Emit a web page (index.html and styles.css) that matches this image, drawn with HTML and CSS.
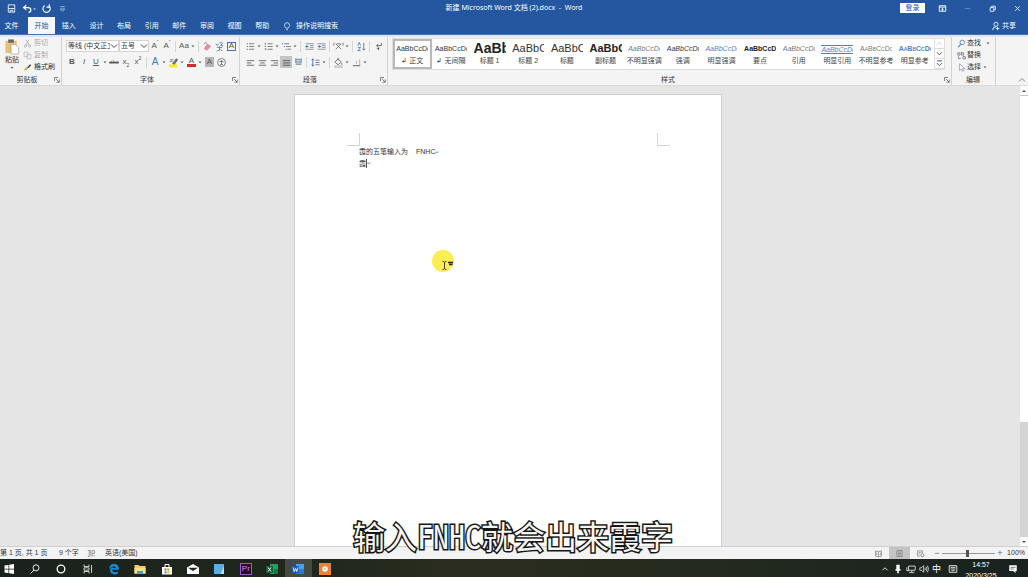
FILE: index.html
```html
<!DOCTYPE html>
<html lang="zh-CN">
<head>
<meta charset="utf-8">
<title>新建 Microsoft Word 文档 (2).docx - Word</title>
<link rel="stylesheet" href="styles.css">
</head>
<body>
<svg class="defs" aria-hidden="true">
  <symbol id="caret" viewBox="0 0 6 12"><path d="M1.5 5.5h3L3 7.2z" fill="#555"/></symbol>
  <symbol id="chev" viewBox="0 0 8 8"><path d="M1 2.5l3 3 3-3" fill="none" stroke="#444"/></symbol>
  <symbol id="launch" viewBox="0 0 6 6"><path d="M.5 4V.5H4M2 2l3 3M5.300 2.500v2.800H2.500" fill="none" stroke="#666" stroke-width=".8"/></symbol>
</svg>

<header class="titlebar">
  <div class="quick">
    <button aria-label="保存"><svg viewBox="0 0 12 12"><path d="M2.500 2h7v8h-7zM2.500 6h7M4.500 10V8h3v2" fill="none" stroke="#fff" stroke-width=".9"/></svg></button>
    <button class="wide" aria-label="撤消"><svg viewBox="0 0 18 12"><path d="M6 2.500L3 5l3 2.500M3.500 5H8q3 0 3 2.500T8.500 10" fill="none" stroke="#fff" stroke-width="1.300"/><path d="M13.500 6h3L15 7.500z" fill="#dce6f5"/></svg></button>
    <button aria-label="恢复"><svg viewBox="0 0 12 12"><path d="M4 2.800A4 4 0 1 0 8.500 3M6 4.500h3V1.300" fill="none" stroke="#fff" stroke-width="1.200"/></svg></button>
    <button class="more" aria-label="自定义"><svg viewBox="0 0 12 12"><path d="M3.500 4h5M3.500 6.500h5L6 9z" fill="none" stroke="#dce6f5" stroke-width=".7"/></svg></button>
  </div>
  <h1>新建 Microsoft Word 文档 (2).docx &nbsp;-&nbsp; Word</h1>
  <div class="window">
    <button class="login">登录</button>
    <button aria-label="功能区显示选项"><svg viewBox="0 0 12 12"><path d="M2.500 3h7v6h-7zM2.500 4.500h7M6 9V6M4.800 7L6 6l1.200 1" fill="none" stroke="#fff"/></svg></button>
    <button aria-label="最小化"><svg viewBox="0 0 12 12"><path d="M3 6h6" stroke="#7f9fd0" stroke-width=".7"/></svg></button>
    <button aria-label="还原"><svg viewBox="0 0 12 12"><path d="M3.500 5h4v4h-4zM5 5V3.500h4v4H7.500" fill="none" stroke="#fff" stroke-width=".9"/></svg></button>
    <button aria-label="关闭"><svg viewBox="0 0 12 12"><path d="M3.500 3.500l5 5M8.500 3.500l-5 5" stroke="#fff" stroke-width=".9"/></svg></button>
  </div>
</header>

<nav class="tabs">
  <button class="file">文件</button>
  <button class="active">开始</button>
  <div class="tablist">
    <button>插入</button><button>设计</button><button>布局</button><button>引用</button><button>邮件</button><button>审阅</button><button>视图</button><button>帮助</button>
  </div>
  <button class="tell"><svg viewBox="0 0 12 12"><path d="M4.500 8.500Q3 6.500 3 5a3 3 0 0 1 6 0q0 1.500-1.500 3.500zM4.800 10.500h2.400" fill="none" stroke="#fff" stroke-width=".8"/></svg>操作说明搜索</button>
  <button class="share"><svg viewBox="0 0 12 12"><circle cx="6" cy="4" r="2.500" fill="none" stroke="#fff"/><path d="M2 11q0-4 4-4M8 7v4M6 9h4" fill="none" stroke="#fff"/></svg>共享</button>
</nav>

<section class="ribbon">
  <div class="group clipboard">
    <div class="body">
      <button class="paste"><svg viewBox="0 0 16 18"><path d="M1 3h12v13H1z" fill="#e9c173"/><path d="M4 1.500h6V5H4z" fill="#666"/><path d="M7 7h5l3 3v7H7z" fill="#fff" stroke="#999" stroke-width=".7"/></svg><span>粘贴</span><svg class="down" viewBox="0 0 6 4"><path d="M1.500 1h3L3 2.700z" fill="#555"/></svg></button>
      <div class="stack">
        <button class="off"><svg viewBox="0 0 12 12"><path d="M4 1l4 7M8 1L4 8" stroke="#aaa"/><circle cx="3.300" cy="9.300" r="1.500" fill="none" stroke="#aaa"/><circle cx="8.700" cy="9.300" r="1.500" fill="none" stroke="#aaa"/></svg>剪切</button>
        <button class="off"><svg viewBox="0 0 12 12"><path d="M1.500 1.500h5v6h-5zM5.500 4.500h5v6h-5z" fill="#f6f6f6" stroke="#b5b5b5"/></svg>复制</button>
        <button><svg viewBox="0 0 12 12"><path d="M1 10q1-4 4-5l2 2q-1 3-6 3z" fill="#e2b35b"/><path d="M5.500 5.500l4-4 1.500 1.500-4 4z" fill="#444"/></svg>格式刷</button>
      </div>
    </div>
    <div class="caption"><span>剪贴板</span><svg><use href="#launch"/></svg></div>
  </div>

  <div class="group font">
    <div class="body">
      <div class="row">
        <span class="pick face"><select aria-label="字体"><option>等线 (中文正文)</option></select><svg><use href="#chev"/></svg></span>
        <span class="pick size"><select aria-label="字号"><option>五号</option></select><svg><use href="#chev"/></svg></span>
        <button class="t">A<sup>ˆ</sup></button><button class="t">A<sup>ˇ</sup></button>
        <hr>
        <button class="t">Aa</button><svg class="c"><use href="#caret"/></svg>
        <hr>
        <button aria-label="清除格式"><svg viewBox="0 0 12 12"><path d="M2 8l4-5 4 2.500-4 4.500H3.500z" fill="#e58aa0"/><path d="M2 4l2-3 2 3" fill="none" stroke="#888" stroke-width=".8"/></svg></button>
        <button aria-label="拼音指南"><svg viewBox="0 0 12 12"><path d="M2 3l1.500 2L5 3M6 2h3v1L7 5h3M3 7h6M6 6v4l-3 1M6 8l3 3" fill="none" stroke="#55779f" stroke-width=".9"/></svg></button>
        <button class="t boxed">A</button>
      </div>
      <div class="row">
        <button class="t"><b>B</b></button><button class="t"><em>I</em></button><button class="t"><u>U</u></button><svg class="c"><use href="#caret"/></svg>
        <button class="t small"><s>abc</s></button><button class="t">x<sub>2</sub></button><button class="t">x<sup>2</sup></button>
        <hr>
        <button class="t glow">A</button><svg class="c"><use href="#caret"/></svg>
        <button aria-label="突出显示"><svg viewBox="0 0 12 12"><path d="M1 8h9v3.500H1z" fill="#f7ea27"/><path d="M2 3h4M2 5h3M5 7l4-5 1.500 1-3.500 5z" fill="#777" stroke="#555" stroke-width=".8"/></svg></button><svg class="c"><use href="#caret"/></svg>
        <button class="t red">A</button><svg class="c"><use href="#caret"/></svg>
        <button class="t shade">A</button>
        <button aria-label="带圈字符"><svg viewBox="0 0 12 12"><circle cx="6" cy="6" r="4.300" fill="none" stroke="#555" stroke-width=".8"/><path d="M3.700 5h4.600M6 3.500V8M4.500 8.300h3" stroke="#555" stroke-width=".8"/></svg></button>
      </div>
    </div>
    <div class="caption"><span>字体</span><svg><use href="#launch"/></svg></div>
  </div>

  <div class="group para">
    <div class="body">
      <div class="row">
        <button aria-label="项目符号"><svg viewBox="0 0 12 12"><path d="M4.500 3H10M4.500 6H10M4.500 9H10" stroke="#777"/><path d="M2 3h1.300M2 6h1.300M2 9h1.300" stroke="#4472b0" stroke-width="1.200"/></svg></button><svg class="c"><use href="#caret"/></svg>
        <button aria-label="编号"><svg viewBox="0 0 12 12"><path d="M5 3h5.500M5 6h5.500M5 9h5.500" stroke="#777"/><path d="M2.500 2v2.500M1.800 6h1.500M1.800 8.500h1.500v1.500" fill="none" stroke="#4472b0" stroke-width=".9"/></svg></button><svg class="c"><use href="#caret"/></svg>
        <button aria-label="多级列表"><svg viewBox="0 0 12 12"><path d="M3.500 3H9M5.500 6H11M7 9h4" stroke="#777"/><path d="M1 3h1.200M3 6h1.200M5 9h1" stroke="#4472b0" stroke-width="1.200"/></svg></button><svg class="c"><use href="#caret"/></svg>
        <hr>
        <button aria-label="减少缩进"><svg viewBox="0 0 12 12"><path d="M1.500 3h9M6.500 5h4M6.500 7h4M1.500 9h9" stroke="#777" stroke-width=".8"/><path d="M5 6H2M3.300 4.700L2 6l1.300 1.300" fill="none" stroke="#2f66b5"/></svg></button>
        <button aria-label="增加缩进"><svg viewBox="0 0 12 12"><path d="M1.500 3h9M6.500 5h4M6.500 7h4M1.500 9h9" stroke="#777" stroke-width=".8"/><path d="M2 6h3M3.700 4.700L5 6 3.700 7.300" fill="none" stroke="#2f66b5"/></svg></button>
        <hr>
        <button aria-label="中文版式"><svg viewBox="0 0 12 12"><path d="M3 3l6 6M9 3L3 9M1 2v3M11 2v3M4 3h4" stroke="#666" stroke-width=".9"/></svg></button><svg class="c"><use href="#caret"/></svg>
        <hr>
        <button aria-label="排序"><svg viewBox="0 0 12 12"><path d="M2 5l1.500-3.500L5 5M2 7h3l-3 3.500h3" fill="none" stroke="#4472b0" stroke-width=".9"/><path d="M8.500 2v8M7 8.500L8.500 10 10 8.500" fill="none" stroke="#666" stroke-width=".9"/></svg></button>
        <hr>
        <button aria-label="显示编辑标记"><svg viewBox="0 0 12 12"><path d="M9 2v3H4M5.500 3.500L4 5l1.500 1.500M4 8h3M6 7v3" fill="none" stroke="#555" stroke-width=".9"/></svg></button>
      </div>
      <div class="row">
        <button aria-label="左对齐"><svg viewBox="0 0 12 12"><path d="M2 4h8M2 6.500h5M2 9h8" stroke="#666"/></svg></button>
        <button aria-label="居中"><svg viewBox="0 0 12 12"><path d="M2 4h8M3.500 6.500h5M2 9h8" stroke="#666"/></svg></button>
        <button aria-label="右对齐"><svg viewBox="0 0 12 12"><path d="M2 4h8M5 6.500h5M2 9h8" stroke="#666"/></svg></button>
        <button class="on" aria-label="两端对齐"><svg viewBox="0 0 12 12"><path d="M2 4h8M2 6.500h8M2 9h8" stroke="#555"/></svg></button>
        <button aria-label="分散对齐"><svg viewBox="0 0 12 12"><path d="M3 1.500v5M9 1.500v5M3 2.500h6M3 4.500h6M3 6.500h6M3 8h6" stroke="#5678a8" stroke-width=".9"/></svg></button>
        <hr>
        <button aria-label="行距"><svg viewBox="0 0 12 12"><path d="M3 2v8M1.800 3.500L3 2l1.200 1.500M1.800 8.500L3 10l1.200-1.500" fill="none" stroke="#2f66b5" stroke-width=".9"/><path d="M6 3.500h4.500M6 6h4.500M6 8.500h4.500" stroke="#777"/></svg></button><svg class="c"><use href="#caret"/></svg>
        <hr>
        <button aria-label="底纹"><svg viewBox="0 0 12 12"><path d="M5.500 2L2 5.500 5.500 8.500 9 5.500zM5.500 4V1M9.500 6.500v2" fill="none" stroke="#666" stroke-width=".9"/><path d="M2 9.800h8v1.400H2z" fill="#fff" stroke="#888" stroke-width=".6"/></svg></button><svg class="c"><use href="#caret"/></svg>
        <button aria-label="边框"><svg viewBox="0 0 12 12"><path d="M2 9.500h8" stroke="#555"/><path d="M9.500 2.500v7M6 4.500v3" stroke="#999" stroke-width=".8"/></svg></button><svg class="c"><use href="#caret"/></svg>
      </div>
    </div>
    <div class="caption"><span>段落</span><svg><use href="#launch"/></svg></div>
  </div>

  <div class="group styles">
    <div class="gallery">
      <div class="items">
        <button class="sel"><span>AaBbCcDc</span>↲ 正文</button>
        <button><span>AaBbCcDc</span>↲ 无间隔</button>
        <button><span class="h1">AaBb</span>标题 1</button>
        <button><span class="h2">AaBbC</span>标题 2</button>
        <button><span class="h2">AaBbC</span>标题</button>
        <button><span class="h2 bold">AaBbC</span>副标题</button>
        <button><span class="it soft">AaBbCcDc</span>不明显强调</button>
        <button><span class="it">AaBbCcDc</span>强调</button>
        <button><span class="it blue">AaBbCcDc</span>明显强调</button>
        <button><span class="bold">AaBbCcD</span>要点</button>
        <button><span class="it soft">AaBbCcDc</span>引用</button>
        <button><span class="it blue lined">AaBbCcDc</span>明显引用</button>
        <button><span class="soft caps">AaBbCcDc</span>不明显参考</button>
        <button><span class="blue caps bold">AaBbCcDc</span>明显参考</button>
      </div>
      <div class="spin">
        <button aria-label="上一行"><svg viewBox="0 0 8 8"><path d="M1 5.500l3-3 3 3" fill="none" stroke="#ccc"/></svg></button>
        <button aria-label="下一行"><svg><use href="#chev"/></svg></button>
        <button aria-label="其他"><svg viewBox="0 0 8 8"><path d="M1 1h6M1 3.500l3 3 3-3" fill="none" stroke="#444"/></svg></button>
      </div>
    </div>
    <div class="caption"><span>样式</span><svg><use href="#launch"/></svg></div>
  </div>

  <div class="group edit">
    <div class="stack">
      <button><svg viewBox="0 0 12 12"><circle cx="7" cy="4.500" r="3" fill="none" stroke="#4472b0"/><path d="M5 7l-3.500 4" stroke="#4472b0" stroke-width="1.500"/></svg>查找<svg class="c last"><use href="#caret"/></svg></button>
      <button><svg viewBox="0 0 12 12"><path d="M1 2.500h3v3H1zM6 1v4.500h3v-3H6M2 7v3h3M8 7.500h3v3H8z" fill="none" stroke="#5b6f8d"/></svg>替换</button>
      <button><svg viewBox="0 0 12 12"><path d="M3.500 1v9L6 8l1.500 3L9 10.300 7.500 7.500h3z" fill="#fff" stroke="#777" stroke-width=".8"/></svg>选择<svg class="c"><use href="#caret"/></svg></button>
    </div>
    <div class="caption"><span>编辑</span></div>
  </div>
  <button class="collapse" aria-label="折叠功能区"><svg viewBox="0 0 8 8"><path d="M1 5.500l3-3 3 3" fill="none" stroke="#888"/></svg></button>
</section>

<main class="workspace">
  <article class="page">
    <div class="marks"><i></i><i></i></div>
    <div class="text">
      <p><span>霞的五笔输入为</span><span>FNHC<small>↵</small></span></p>
      <p class="typing"><span>霞</span><i></i><small>↵</small></p>
    </div>
    <svg class="pointer" viewBox="0 0 24 24"><circle cx="11" cy="11" r="11" fill="#fbee50"/><path d="M10.500 11.500q2 0 2 1v6q0 1-2 1M14.500 11.500q-2 0-2 1v6q0 1 2 1" fill="none" stroke="#443f20"/><path d="M16 12.500h5M17 14.500h3.500" stroke="#222" stroke-width="1.700"/></svg>
  </article>
  <div class="scroll">
    <button aria-label="向上"><svg viewBox="0 0 8 8"><path d="M2 5h4L4 3z" fill="#555"/></svg></button>
    <div class="track"><div class="thumb"></div></div>
    <button aria-label="向下"><svg viewBox="0 0 8 8"><path d="M2 3h4L4 5z" fill="#555"/></svg></button>
  </div>
</main>

<footer class="status">
  <span class="pages">第 1 页, 共 1 页</span>
  <span class="words">9 个字</span>
  <svg class="proof" viewBox="0 0 12 12"><path d="M1 2h4v8M3 2v8H1M7 10V2h3v4H7M9 8l1 2" fill="none" stroke="#777" stroke-width=".9"/></svg>
  <span>英语(美国)</span>
  <div class="views">
    <button aria-label="阅读视图"><svg viewBox="0 0 12 12"><path d="M2 2.500l4 1 4-1v7l-4 1-4-1zM6 3.500v7M3.500 5v3M8.500 5v3" fill="none" stroke="#777" stroke-width=".9"/></svg></button>
    <button class="on" aria-label="页面视图"><svg viewBox="0 0 12 12"><path d="M2.500 2h7v8h-7zM4 4h4M4 6h4M4 8h4" fill="none" stroke="#777" stroke-width=".9"/></svg></button>
    <button aria-label="Web 版式"><svg viewBox="0 0 12 12"><path d="M2 2.500h7V6M2 2.500v7h3M3.500 4.500h4M3.500 6.500h2" fill="none" stroke="#777" stroke-width=".9"/><circle cx="8.500" cy="8.500" r="2" fill="none" stroke="#777"/></svg></button>
  </div>
  <button class="zoombtn" aria-label="缩小">−</button>
  <input type="range" aria-label="缩放" min="0" max="200" value="95">
  <button class="zoombtn" aria-label="放大">+</button>
  <span class="percent">100%</span>
</footer>

<footer class="taskbar">
  <div class="apps">
    <button class="start" aria-label="开始"><svg viewBox="0 0 12 12"><path d="M1.500 2.500l4-.6v3.800h-4zM6.200 1.800l4.800-.7v4.600H6.200zM1.500 6.400h4v3.800l-4-.6zM6.200 6.400H11V11l-4.800-.7z" fill="#fff"/></svg></button>
    <button aria-label="搜索"><svg viewBox="0 0 12 12"><circle cx="7" cy="4.800" r="3" fill="none" stroke="#eee"/><path d="M5 7l-3.500 3.500" stroke="#eee"/></svg></button>
    <button aria-label="Cortana"><svg viewBox="0 0 12 12"><circle cx="6" cy="6" r="3.800" fill="none" stroke="#fff" stroke-width="1.300"/></svg></button>
    <button aria-label="任务视图"><svg viewBox="0 0 12 12"><path d="M2 1.500v2h5v-2M2 10.500v-2h5v2M2 4.800h5v2.400H2zM9.500 2v8M9.500 5.500v1.500" fill="none" stroke="#ddd" stroke-width=".9"/></svg></button>
    <button aria-label="Edge"><svg viewBox="0 0 12 12"><path d="M1 6Q1.500 1 6 .8q5 .2 5 6H4q.5 2.200 3 2.400 1.700 0 3-.8v2.200Q9 11.500 6.500 11.500 2 11 2 7q.3-2.500 2.500-3.300Q2.300 4 1 6zM4.200 5h3.600Q7.500 3.300 6 3.300 4.500 3.500 4.200 5z" fill="#1a86d9"/></svg></button>
    <button aria-label="文件资源管理器"><svg viewBox="0 0 12 12"><path d="M.5 2h4l1 1h6v7.500H.5z" fill="#f3cf66"/><path d="M.5 5h11v5.500H.5z" fill="#fbe08a"/><path d="M3 10.500V8h6v2.500z" fill="#3d9bdd"/></svg></button>
    <button aria-label="应用商店"><svg viewBox="0 0 12 12"><path d="M1 4h10v7.500H1z" fill="#fff"/><path d="M4 4V1.500h4V4" fill="none" stroke="#fff"/><path d="M3.500 5.500h2v2h-2z" fill="#e8562a"/><path d="M6.300 5.500h2v2h-2z" fill="#7eb900"/><path d="M3.500 8.300h2v2h-2z" fill="#1b9de2"/><path d="M6.300 8.300h2v2h-2z" fill="#f7b500"/></svg></button>
    <button aria-label="邮件"><svg viewBox="0 0 12 12"><path d="M0 4.500L6 1l6 3.500V11H0z" fill="#fff"/><path d="M1 4.800h10L6 8z" fill="#1d251d"/></svg></button>
    <button aria-label="便笺"><svg viewBox="0 0 12 12"><path d="M1 1h10v10H1z" fill="#58aee5"/><path d="M11 3v8H7.500z" fill="#b9e0f7"/></svg></button>
    <button aria-label="Premiere"><span class="pr">Pr</span></button>
    <button aria-label="Excel"><svg viewBox="0 0 12 12"><path d="M4 1h8v10H4z" fill="#21a366"/><path d="M8 6h4v5H8z" fill="#107c41"/><path d="M0 3h7v7H0z" fill="#185c37"/><path d="M2 4.500l3 4M5 4.500l-3 4" stroke="#fff"/></svg></button>
    <button class="current" aria-label="Word"><svg viewBox="0 0 12 12"><path d="M4 1h8v10H4z" fill="#41a5ee"/><path d="M4 6h8v5H4z" fill="#2b7cd3"/><path d="M0 3h7v7H0z" fill="#185abd"/><path d="M1.200 4.500l1 4 1.300-3 1.300 3 1-4" fill="none" stroke="#fff" stroke-width=".9"/></svg></button>
    <button aria-label="录屏"><svg viewBox="0 0 12 12"><path d="M0 0h12v12H0z" fill="#ec8433"/><circle cx="6" cy="6" r="2.700" fill="#fff"/><circle cx="6" cy="6" r="1.100" fill="#f5b07a"/></svg></button>
  </div>
  <div class="tray">
    <button aria-label="显示隐藏的图标"><svg viewBox="0 0 12 12"><path d="M3 7.500l3-3 3 3" fill="none" stroke="#fff"/></svg></button>
    <button aria-label="麦克风"><svg viewBox="0 0 12 12"><path d="M4 1h4v6H4zM3 6h6v2H3zM5 8h2v3H5z" fill="#fff"/></svg></button>
    <button aria-label="网络"><svg viewBox="0 0 12 12"><path d="M3 2.500h8v5H3zM7 7.500V10M4 10.300h6M1 4v4h3" fill="none" stroke="#eee"/></svg></button>
    <button aria-label="音量"><svg viewBox="0 0 12 12"><path d="M1 4.500h2L5.500 2v8L3 7.500H1zM7 4.500q1 1.500 0 3M8.500 3q2 3 0 6M10.200 2q2.300 4 0 8" fill="none" stroke="#eee" stroke-width=".9"/></svg></button>
    <button class="ime">中</button>
    <button aria-label="输入法"><svg viewBox="0 0 12 12"><path d="M1.500 2h9v8h-9z" fill="none" stroke="#fff"/><path d="M3 4h6M3 6h6M4 8h4" stroke="#fff"/></svg></button>
    <time class="clock">14:57<br>2020/3/25</time>
    <button class="note" aria-label="通知"><svg viewBox="0 0 12 12"><path d="M1.500 1.500h9v7H9V11L6.500 8.500h-5z" fill="#fff"/><path d="M3 4h6M3 6h4" stroke="#333" stroke-width=".8"/></svg></button>
  </div>
</footer>

<div class="subtitle">输入<span>FNHC</span>就会出来霞字</div>
</body>
</html>
```

FILE: styles.css
```css
* { box-sizing: border-box; }
html, body { height: 100%; }
body {
  margin: 0;
  display: flex;
  flex-direction: column;
  overflow: hidden;
  position: relative;
  font: 7px/10px "Liberation Sans", "Noto Sans CJK SC", sans-serif;
  color: #333;
  background: #e5e5e5;
}
button {
  font: inherit;
  color: inherit;
  background: none;
  border: 0;
  padding: 0;
  margin: 0;
  white-space: nowrap;
  display: flex;
  align-items: center;
  justify-content: center;
}
svg { display: block; width: 12px; height: 12px; flex: none; }
.defs { position: absolute; width: 0; height: 0; }
p, h1 { margin: 0; font-weight: normal; }

/* Title bar */
.titlebar {
  display: grid;
  grid-template-columns: 1fr auto 1fr;
  align-items: center;
  height: 17px;
  flex: none;
  padding-bottom: 1px;
  background: #24579f;
  color: #fff;
}
.titlebar h1 { font-size: 7px; font-family: "Noto Sans", "Noto Sans CJK SC", sans-serif; }
.titlebar svg { width: 11px; height: 11px; }
.quick { display: flex; align-items: center; padding-left: 6px; gap: 3px; }
.quick .wide svg { width: 18px; }
.quick .more { padding-left: 2px; }
.window { display: flex; align-items: center; justify-content: flex-end; gap: 14px; padding-right: 5px; }
.window .login { width: 25px; height: 10px; background: #fff; color: #24579f; margin-right: -2px; }

/* Tabs */
.tabs {
  display: flex;
  height: 18px;
  flex: none;
  background: #24579f;
  border-bottom: 1px solid #4a73b2;
  color: #fff;
}
.tabs > .file { width: 28px; padding-right: 5px; }
.tabs > .active { width: 27px; background: #f5f6f8; color: #24579f; }
.tablist { display: grid; grid-template-columns: repeat(8, 1fr); width: 221px; }
.tell { margin-left: 6px; gap: 4px; }
.share { margin-left: auto; margin-right: 12px; gap: 1px; }
.tell svg, .share svg { width: 10px; height: 10px; }

/* Ribbon */
.ribbon {
  display: flex;
  flex: none;
  height: 51px;
  background: #f4f4f4;
  border-top: 2px solid #dfe6f1;
  border-bottom: 1px solid #dadada;
}
.group { display: flex; flex-direction: column; border-right: 1px solid #d2d2d2; }
.group .body { flex: 1; padding-top: 1px; }
.caption { display: flex; align-items: center; height: 11px; padding-right: 1px; margin-top: auto; }
.caption span { flex: 1; text-align: center; }
.caption svg { width: 6px; height: 6px; }
.clipboard { width: 62px; }
.group.clipboard .body { display: flex; gap: 3px; padding: 0 0 0 4px; }
.paste { flex-direction: column; width: 16px; justify-content: flex-start; padding-top: 1px; }
.paste svg { width: 16px; height: 17px; }
.paste .down { width: 6px; height: 4px; margin-top: 1px; }
.paste span { height: 10px; }
.stack { display: flex; flex-direction: column; }
.stack button { height: 12px; gap: 1px; justify-content: flex-start; }
.stack svg { width: 9px; height: 9px; }
.clipboard .stack button { gap: 2px; }
.off { color: #aaa; }

.font { width: 178px; }
.para { width: 148px; }
.font .body, .para .body { padding-left: 4px; }
.row { display: flex; align-items: center; height: 16px; }
.row > button { width: 12px; height: 12px; flex: none; }
.row > button svg { width: 11px; height: 11px; }
svg.c { width: 6px; height: 12px; }
.row hr { width: 1px; height: 11px; margin: 0 2px; border: 0; background: #d6d6d6; }
.t { font-size: 8px; color: #555; }
.t sup, .t sub { font-size: 5px; line-height: 5px; }
.t sup { align-self: flex-start; }
.t sub { align-self: flex-end; }
.small { font-size: 6px; }
.row > .boxed { width: 9px; height: 9px; margin-left: 2px; border: 1px solid #4472b0; }
.glow { color: #3f78c0; font-size: 10px; }
.red { border-bottom: 3px solid #d8282e; line-height: 8px; }
.row > .red, .row > .shade { width: 9px; height: 10px; margin: 0 1px 0 2px; }
.shade { background: #b5b5b5; }
.on { background: #c4c4c4; }
.pick { position: relative; display: flex; flex: none; height: 12px; }
.pick.face { width: 53px; }
.pick.size { width: 30px; }
.pick select {
  appearance: none;
  width: 100%;
  font: inherit;
  color: #333;
  background: #fff;
  border: 1px solid #d4d4d4;
  border-radius: 0;
  padding: 0 8px 0 1px;
}
.pick svg { position: absolute; right: 1px; top: 2px; width: 8px; height: 8px; pointer-events: none; }

.styles { flex: 1; padding-left: 4px; min-width: 0; }
.gallery { display: flex; height: 32px; margin: 1px 6px 0 0; background: #fff; border: 1px solid #dcdcdc; }
.items { flex: 1; display: grid; grid-template-columns: repeat(14, minmax(0, 1fr)); }
.items button { flex-direction: column; color: #444; overflow: hidden; }
.items span {
  display: block;
  width: 32px;
  height: 14px;
  line-height: 14px;
  overflow: hidden;
  text-align: left;
  color: #333;
}
.items .sel { border: 2px solid #b8b8b8; }
.items .h1 { font-size: 14px; font-weight: bold; color: #222; line-height: 13px; }
.items .h2 { font-size: 11px; line-height: 13px; }
.items .bold { font-weight: bold; color: #222; }
.items .it { font-style: italic; }
.items .soft { color: #777; }
.items .blue { color: #4f83cc; }
.items .caps { font-variant: small-caps; }
.items .lined { height: 9px; line-height: 7px; border: solid #5c8298; border-width: 1px 0; margin: 3px 0 2px; }
.spin { width: 10px; display: flex; flex-direction: column; border-left: 1px solid #dcdcdc; }
.spin button { flex: 1; border-bottom: 1px solid #dcdcdc; }
.spin svg { width: 7px; height: 7px; }

.edit { width: 44px; }
.edit .stack { padding-left: 5px; }
.edit .last { margin-left: 3px; }
.edit svg.c { width: 6px; height: 12px; }
.collapse { width: 32px; justify-content: flex-end; align-items: flex-end; padding: 0 2px 1px 0; }
.collapse svg { width: 8px; height: 8px; }

/* Document */
.workspace { flex: 1; min-height: 0; display: flex; }
.workspace::before { content: ""; width: 4px; order: 1; }
.page {
  position: relative;
  width: 428px;
  margin: 8px auto 0;
  background: #fff;
  border: 1px solid #d0d0d0;
  border-bottom: 0;
}
.marks { display: flex; justify-content: space-between; padding: 38px 51px 0 52px; }
.marks i { width: 13px; height: 13px; border: solid #d4d4d4; border-width: 0 1px 1px 0; }
.marks i:last-child { border-width: 0 0 1px 1px; }
.text { padding-left: 64px; font-size: 7px; line-height: 11px; color: #333; }
.text p { display: flex; gap: 8px; }
.text .typing { gap: 0; }
.text small { font-size: 5px; color: #888; }
.typing i { width: 1px; height: 9px; margin-top: 1px; background: #555; }
.pointer { position: absolute; left: 137px; top: 155px; width: 24px; height: 24px; }
.scroll { order: 2; width: 8px; display: flex; flex-direction: column; background: #d4d4d4; }
.scroll button { height: 9px; background: #fafafa; }
.scroll svg { width: 8px; height: 8px; }
.track { flex: 1; border-top: 1px solid #c6c6c6; }
.thumb { height: 74%; background: #fff; }

/* Status bar */
.status {
  display: flex;
  align-items: center;
  height: 13px;
  flex: none;
  padding-right: 3px;
  background: #f3f3f3;
  border-top: 1px solid #d0d0d0;
  white-space: nowrap;
}
.pages { width: 59px; }
.words { width: 28px; }
.proof { width: 9px; height: 9px; margin-right: 9px; }
.views { display: flex; margin-left: auto; margin-right: 1px; }
.views button { width: 21px; height: 12px; }
.views svg { width: 9px; height: 9px; }
.zoombtn { width: 10px; font-size: 9px; color: #666; }
.status input { appearance: none; width: 53px; height: 10px; margin: 0; background: none; }
.status input::-webkit-slider-runnable-track { height: 1px; background: #999; }
.status input::-webkit-slider-thumb { appearance: none; width: 3px; height: 7px; margin-top: -3px; background: #555; }
.percent { width: 20px; text-align: right; }

/* Taskbar */
.taskbar {
  display: flex;
  justify-content: space-between;
  height: 18px;
  flex: none;
  overflow: hidden;
  color: #fff;
  background: linear-gradient(90deg, #19231d, #20271c 30%, #2b2d20 45%, #252b1e 65%, #18221f);
}
.apps { display: grid; grid-template-columns: 22px repeat(12, 1fr); width: 338px; height: 20px; }
.apps svg { width: 12px; height: 12px; }
.apps .start { justify-content: flex-start; padding-left: 3px; }
.current { background: #454b43; }
.pr {
  width: 12px;
  height: 12px;
  line-height: 10px;
  border: 1px solid #a35bc4;
  background: #2a0634;
  color: #dd8cf5;
  font-size: 8px;
}
.tray { display: flex; height: 20px; padding-right: 2px; }
.tray button { width: 13px; }
.tray svg { width: 10px; height: 10px; }
.tray .ime { font-size: 9px; }
.tray button:nth-child(6) { width: 19px; }
.clock { width: 38px; text-align: center; line-height: 11px; }
.tray .note { width: 26px; }

/* Video caption */
.subtitle {
  position: absolute;
  left: 0;
  right: 0;
  bottom: 25px;
  padding-right: 2px;
  text-align: center;
  font: 32px/34px "Noto Sans CJK SC", sans-serif;
  color: #f6f6f6;
  -webkit-text-stroke: 3px #161616;
  paint-order: stroke fill;
  white-space: nowrap;
  pointer-events: none;
}
.subtitle span { font-family: "Noto Sans Mono CJK SC", "Liberation Mono", monospace; }
```
